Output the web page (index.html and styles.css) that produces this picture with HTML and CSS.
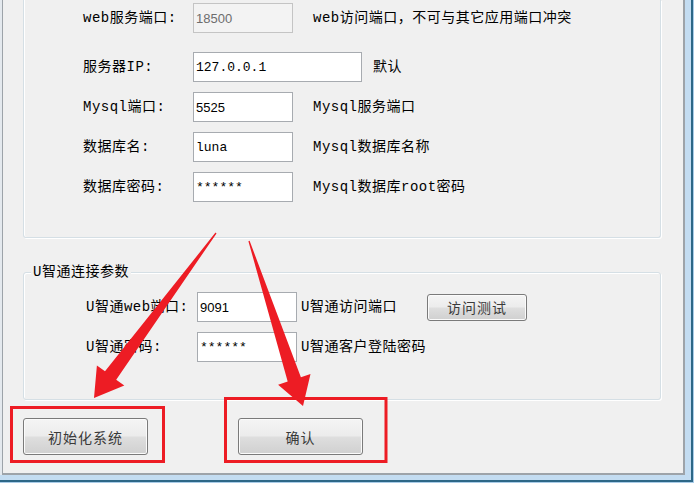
FILE: index.html
```html
<!DOCTYPE html>
<html lang="zh-CN">
  <head>
    <meta charset="UTF-8" />
    <title>系统设置</title>
    <link rel="stylesheet" href="styles.css">
  </head>
  <body>
    <div class="window">
      <div class="client">
        <div class="group group-db">
          <div class="row row-first">
            <span class="label">web服务端口:</span>
            <input class="field" type="text" value="18500" disabled />
            <span class="hint">web访问端口，不可与其它应用端口冲突</span>
          </div>
          <div class="row row-ip">
            <span class="label">服务器IP:</span>
            <input class="field field-wide field-mono" type="text" value="127.0.0.1" />
            <span class="hint">默认</span>
          </div>
          <div class="row">
            <span class="label">Mysql端口:</span>
            <input class="field" type="text" value="5525" />
            <span class="hint">Mysql服务端口</span>
          </div>
          <div class="row">
            <span class="label">数据库名:</span>
            <input class="field field-mono" type="text" value="luna" />
            <span class="hint">Mysql数据库名称</span>
          </div>
          <div class="row">
            <span class="label">数据库密码:</span>
            <input class="field field-mono" type="text" value="******" />
            <span class="hint">Mysql数据库root密码</span>
          </div>
        </div>

        <div class="group group-uzt">
          <span class="group-title">U智通连接参数</span>
          <div class="row">
            <span class="label">U智通web端口:</span>
            <input class="field" type="text" value="9091" />
            <span class="hint">U智通访问端口</span>
            <button class="btn btn-test">访问测试</button>
          </div>
          <div class="row">
            <span class="label">U智通密码:</span>
            <input class="field field-mono" type="text" value="******" />
            <span class="hint">U智通客户登陆密码</span>
          </div>
        </div>

        <div class="actions">
          <button class="btn btn-big">初始化系统</button>
          <button class="btn btn-big">确认</button>
        </div>
      </div>

      <!-- red annotation marks drawn over the dialog -->
      <svg class="marks" width="694" height="483" viewBox="0 0 694 483">
        <rect x="11.5" y="407.5" width="152" height="54" fill="none" stroke="#ed1c24" stroke-width="3" />
        <rect x="225.5" y="398.5" width="160.5" height="63" fill="none" stroke="#ed1c24" stroke-width="3" />
        <polygon fill="#ed1c24" points="215.5,232.6 105,371.3 96.9,365.4 94,398 124.3,385.6 116.2,379.7 216.5,233.4" />
        <polygon fill="#ed1c24" points="248.4,241.2 287.7,381.6 278.1,384.7 303,406 310.5,374.1 300.9,377.2 249.6,240.8" />
      </svg>
    </div>
  </body>
</html>
```

FILE: styles.css
```css
:root {
  --client-bg: #f0f0f0;
  --frame-bg: #c3dcf1;
  --frame-edge: #9da3a9;
  --group-line: #d5dfe5;
  --field-border: #a7abb0;
  --mark-red: #ed1c24;
}

body {
  margin: 0;
  background-color: var(--frame-bg);
  font-family: "Liberation Mono", "Noto Sans CJK SC", monospace;
  font-size: 14px;
  letter-spacing: 0.5px;
  color: #000;
}

.window {
  position: relative;
  width: 694px;
  height: 483px;
  overflow: hidden;
  background-color: var(--frame-bg);
  box-shadow: inset -1px -1px 0 #a9cce8, inset -3px -3px 0 #2d6787;
}

.client {
  margin-left: 2px;
  width: 680px;
  height: 473px;
  background-color: var(--client-bg);
  border-left: 1px solid var(--frame-edge);
  border-right: 2px solid var(--frame-edge);
  border-bottom: 2px solid var(--frame-edge);
  box-shadow: -2px 0 0 #e4e9ee;
}

.group {
  margin-left: 20px;
  width: 636px;
  border: 1px solid var(--group-line);
  border-radius: 3px;
  box-shadow: inset 1px 1px 0 #fff, 1px 1px 0 #fff;
}

.group-db {
  display: flex;
  flex-direction: column;
  gap: 10px;
  border-top: none;
  border-radius: 0 0 3px 3px;
  padding: 3px 0 35px;
  box-shadow: inset 1px 0 0 #fff, 1px 1px 0 #fff;
}

.group-uzt {
  display: flex;
  flex-direction: column;
  gap: 10px;
  margin-top: 34px;
  padding: 0 0 37px;
}

.group-title {
  display: block;
  width: fit-content;
  margin: -9px 0 2px 7px;
  padding: 0 2px;
  line-height: 16px;
  background-color: var(--client-bg);
}

.row {
  display: flex;
  align-items: center;
  height: 30px;
  line-height: 16px;
  white-space: nowrap;
}

.row-first {
  margin-bottom: 9px;
}

.label {
  flex: none;
}

.group-db .label {
  width: 110px;
  padding-left: 59px;
}

.group-uzt .label {
  width: 111px;
  padding-left: 62px;
}

.field {
  flex: none;
  box-sizing: border-box;
  width: 100px;
  height: 30px;
  margin: 0;
  padding: 0 2px;
  border: 1px solid var(--field-border);
  background-color: #fff;
  font-family: "Liberation Sans", sans-serif;
  font-size: 13px;
  letter-spacing: 0;
  color: #000;
  outline: none;
}

.field-wide {
  width: 169px;
}

.field-mono {
  font-family: "Liberation Mono", monospace;
}

.field:disabled {
  background-color: #f3f3f3;
  border-color: #c4c4c4;
  color: #6d6d6d;
}

.hint {
  margin-left: 20px;
}

.row-ip .hint {
  margin-left: 11px;
}

.group-uzt .hint {
  flex: none;
  width: 126px;
  margin-left: 4px;
}

.btn {
  box-sizing: border-box;
  padding: 0;
  border: 1px solid #7a7a7a;
  border-radius: 3px;
  background: linear-gradient(#f4f4f4, #ececec 48%, #dedede 52%, #d0d0d0);
  box-shadow: inset 0 0 0 1px #fbfbfb;
  font-family: "Noto Sans CJK SC", sans-serif;
  font-size: 14px;
  letter-spacing: 1px;
  color: #3a3a3a;
}

.btn-test {
  width: 100px;
  height: 27px;
}

.actions {
  display: flex;
  gap: 90px;
  margin: 18px 0 0 20px;
}

.btn-big {
  width: 125px;
  height: 37px;
}

.marks {
  position: absolute;
  left: 0;
  top: 0;
  pointer-events: none;
}
```
